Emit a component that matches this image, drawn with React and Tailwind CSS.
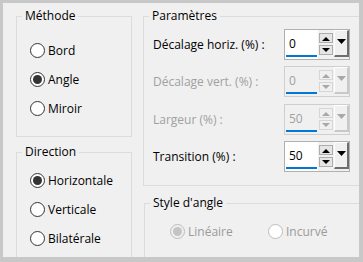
import React from "react";

const font = { fontFamily: "'Open Sans', 'Noto Sans', Arial, sans-serif" };

function Radio({ label, checked, disabled }) {
  return (
    <div className="flex items-center h-[29px]">
      <span
        className={`w-[15px] h-[15px] rounded-full border flex items-center justify-center ${
          disabled ? "border-[#bcbcbc] bg-[#f0f0f0]" : "border-[#333333] bg-white"
        } ${disabled && !checked ? "bg-white" : ""}`}
      >
        {checked && (
          <span
            className={`w-[9px] h-[9px] rounded-full ${
              disabled ? "bg-[#c4c4c4]" : "bg-[#333333]"
            }`}
          />
        )}
      </span>
      <span
        className={`ml-[3px] text-[12px] ${
          disabled ? "text-[#9a9a9a]" : "text-black"
        }`}
      >
        {label}
      </span>
    </div>
  );
}

function Group({ title, className, children }) {
  return (
    <fieldset className={`border border-[#dcdcdc] ${className}`}>
      <legend className="ml-[5px] px-[3px] text-[12px] leading-[16px] text-black">
        {title}
      </legend>
      {children}
    </fieldset>
  );
}

function Spin({ value, disabled }) {
  const arrow = disabled ? "#a8a8a8" : "#000000";
  return (
    <div
      className={`w-[66px] h-[31px] border flex ${
        disabled ? "border-[#cfcfcf]" : "border-[#b0b0b0]"
      }`}
    >
      <div
        className={`w-[34px] flex flex-col ${disabled ? "bg-[#f0f0f0]" : "bg-white"}`}
      >
        <div
          className={`flex-1 pl-[4px] flex items-center pt-[2px] text-[12px] ${
            disabled ? "text-[#a0a0a0]" : "text-black"
          }`}
        >
          {value}
        </div>
        <div className="h-[2px] mx-[1px] mb-[2px] bg-[#0078d7]" />
      </div>
      <div className="flex flex-col gap-[2px] mt-[3px] ml-[1px]">
        <div
          className={`w-[14px] h-[10px] border flex items-center justify-center ${
            disabled ? "border-[#d6d6d6] bg-[#f0f0f0]" : "border-[#adadad] bg-[#e5e5e5]"
          }`}
        >
          <svg width="8" height="5" viewBox="0 0 8 5">
            <path d="M0 5 L4 1 L8 5 Z" fill={arrow} />
          </svg>
        </div>
        <div
          className={`w-[14px] h-[10px] border flex items-center justify-center ${
            disabled ? "border-[#d6d6d6] bg-[#f0f0f0]" : "border-[#adadad] bg-[#e5e5e5]"
          }`}
        >
          <svg width="8" height="5" viewBox="0 0 8 5">
            <path d="M0 0 L8 0 L4 4 Z" fill={arrow} />
          </svg>
        </div>
      </div>
      <div
        className={`w-[15px] h-[27px] ml-[1px] border-t border-l border-r-2 border-b-2 flex justify-center pt-[8px] ${
          disabled
            ? "border-t-white border-l-white border-r-[#c8c8c8] border-b-[#c8c8c8]"
            : "border-t-white border-l-white border-r-[#6e6e6e] border-b-[#6e6e6e]"
        }`}
      >
        <svg width="9" height="5" viewBox="0 0 9 5">
          <path d="M0 0 L9 0 L4.5 5 Z" fill={arrow} />
        </svg>
      </div>
    </div>
  );
}

export default function App() {
  const rows = [
    { label: "Décalage horiz. (%) :", value: "0", disabled: false, mt: "mt-[5px]" },
    { label: "Décalage vert. (%) :", value: "0", disabled: true, mt: "mt-[6px]" },
    { label: "Largeur (%) :", value: "50", disabled: true, mt: "mt-[7px]" },
    { label: "Transition (%) :", value: "50", disabled: false, mt: "mt-[6px]" },
  ];

  return (
    <div
      style={font}
      className="w-[363px] h-[262px] overflow-hidden bg-[#f0f0f0] border-t-[3px] border-l-[3px] border-r-[4px] border-b-[5px] border-[#c8c8c8] flex"
    >
      <div className="ml-[13px] mt-[5px] w-[116px] flex flex-col shrink-0">
        <Group title="Méthode" className="h-[129px] shrink-0">
          <div className="pl-[13px] pt-[12px]">
            <Radio label="Bord" />
            <Radio label="Angle" checked />
            <Radio label="Miroir" />
          </div>
        </Group>
        <Group title="Direction" className="mt-[7px] h-[150px] shrink-0">
          <div className="pl-[13px] pt-[6px]">
            <Radio label="Horizontale" checked />
            <Radio label="Verticale" />
            <Radio label="Bilatérale" />
          </div>
        </Group>
      </div>

      <div className="ml-[11px] mt-[5px] w-[222px] flex flex-col shrink-0">
        <Group title="Paramètres" className="h-[178px] shrink-0">
          <div className="flex flex-col pl-[9px]">
            {rows.map((r) => (
              <div key={r.label} className={`flex items-center ${r.mt}`}>
                <span
                  className={`w-[131px] text-[12px] ${
                    r.disabled ? "text-[#a0a0a0]" : "text-black"
                  }`}
                >
                  {r.label}
                </span>
                <Spin value={r.value} disabled={r.disabled} />
              </div>
            ))}
          </div>
        </Group>
        <Group title="Style d'angle" className="mt-[9px] ml-[1px] h-[100px] shrink-0">
          <div className="flex pl-[25px] pt-[6px]">
            <div className="w-[98px]">
              <Radio label="Linéaire" checked disabled />
            </div>
            <Radio label="Incurvé" disabled />
          </div>
        </Group>
      </div>
    </div>
  );
}
